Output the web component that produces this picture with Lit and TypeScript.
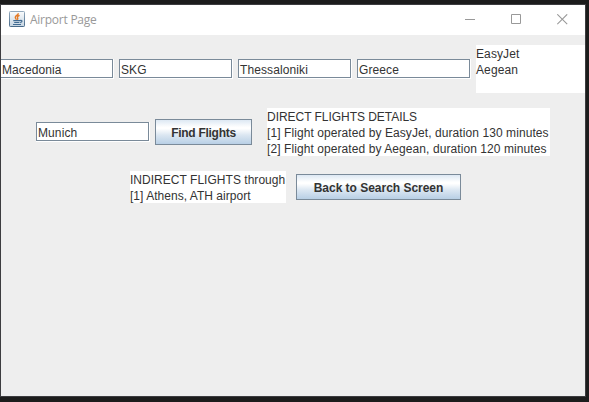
import { LitElement, html, css } from "lit";
import { customElement, property } from "lit/decorators.js";

@customElement("text-field")
class TextField extends LitElement {
  @property() value = "";
  static styles = css`
    :host {
      display: block;
      box-sizing: border-box;
      width: 114px;
      height: 20px;
      flex: none;
      border-right: 1px solid #fff;
      border-bottom: 1px solid #fff;
    }
    .box {
      box-sizing: border-box;
      height: 19px;
      border: 1px solid #7a8a99;
      background: #fff;
      padding: 1px 0 0 1px;
      line-height: 19px;
      white-space: pre;
    }
  `;
  render() {
    return html`<div class="box">${this.value}</div>`;
  }
}

@customElement("metal-button")
class MetalButton extends LitElement {
  static styles = css`
    :host {
      display: block;
      flex: none;
    }
    button {
      display: block;
      box-sizing: border-box;
      width: 100%;
      height: 26px;
      padding: 1px 0 0;
      border: 1px solid #7a8a99;
      border-radius: 0;
      background: linear-gradient(#dde8f3 0, #fff 30%, #fff 36%, #dce7f2 62%, #b8cfe5 100%);
      font: bold 12px "Liberation Sans", Arial, sans-serif;
      letter-spacing: inherit;
      color: #333;
      text-align: center;
      white-space: nowrap;
    }
  `;
  render() {
    return html`<button><slot></slot></button>`;
  }
}

@customElement("app-root")
class AppRoot extends LitElement {
  static styles = css`
    :host {
      display: block;
      box-sizing: border-box;
      width: 589px;
      height: 402px;
      padding-top: 4px;
      overflow: hidden;
      background: #1c1c1c;
      font: 12px/16px "Liberation Sans", Arial, sans-serif;
      letter-spacing: 0.1px;
      color: #333;
    }
    .window {
      box-sizing: border-box;
      width: 586px;
      height: 393px;
      border: 1px solid #3c3c3f;
      background: #eee;
      overflow: hidden;
    }
    .titlebar {
      display: flex;
      align-items: center;
      height: 30px;
      background: #fff;
      color: #999;
    }
    .logo {
      margin: -2px 0 0 8px;
      width: 16px;
      height: 16px;
    }
    .title {
      margin-left: 5px;
      flex: 1;
      font: 12px/16px "Open Sans", "Noto Sans", sans-serif;
      letter-spacing: -0.25px;
    }
    .controls {
      display: flex;
      gap: 35px;
      margin: -2px 17px 0 0;
    }
    .controls svg {
      width: 11px;
      height: 11px;
      display: block;
    }
    .row {
      display: flex;
      align-items: center;
      gap: 5px;
    }
    .first {
      margin: 10px 0 0 -1px;
    }
    .second {
      margin: 15px 0 0 35px;
    }
    .third {
      margin: 15px 0 0 129px;
    }
    .area {
      flex: none;
      background: #fff;
      white-space: pre;
      padding-top: 1px;
      box-sizing: border-box;
    }
    .airlines {
      width: 110px;
      height: 48px;
    }
    .direct {
      width: 283px;
      height: 48px;
      margin-left: 10px;
      letter-spacing: 0.08px;
    }
    .heading {
      letter-spacing: -0.04px;
    }
    .indirect {
      width: 156px;
      height: 32px;
      margin-right: 5px;
      letter-spacing: 0.03px;
    }
    .find {
      width: 97px;
      letter-spacing: -0.28px;
    }
    .back {
      width: 165px;
      letter-spacing: -0.02px;
    }
  `;
  render() {
    return html`
      <div class="window">
        <div class="titlebar">
          <svg class="logo" viewBox="0 0 16 16">
            <defs>
              <linearGradient id="face" x2="0" y2="1">
                <stop stop-color="#fafcfd" />
                <stop offset="1" stop-color="#c5d4e1" />
              </linearGradient>
              <linearGradient id="edge" x2="0" y2="1">
                <stop stop-color="#93a9bd" />
                <stop offset="1" stop-color="#486a89" />
              </linearGradient>
            </defs>
            <rect x=".5" y=".5" width="15" height="15" rx=".8" fill="url(#face)" stroke="url(#edge)" />
            <path d="M9.3 2.2C9.5 4.2 6.2 4.6 6.3 6.5 6.4 7.5 7.2 7.8 7.3 8.8M10.6 4.4C8.8 5 8 5.9 8.6 6.8 9 7.5 8.9 8 8.4 8.8" fill="none" stroke="#e57a25" stroke-width="1.4" />
            <path d="M4.3 9.6H11M5.2 11.5H10.4M4 13.5H12M11 9.5C13.8 8.8 13.6 11 11.2 11.7" fill="none" stroke="#416b92" stroke-width="1.2" />
          </svg>
          <span class="title">Airport Page</span>
          <div class="controls">
            <svg viewBox="0 0 11 11"><path d="M0 5.5H10" stroke="#999" /></svg>
            <svg viewBox="0 0 11 11"><path d="M.5 .5H9.5V9.5H.5Z" fill="none" stroke="#999" /></svg>
            <svg viewBox="0 0 11 11"><path d="M.3 .3L10.2 10.2M10.2 .3L.3 10.2" stroke="#999" stroke-width="1.1" /></svg>
          </div>
        </div>
        <div class="row first">
          ${["Macedonia", "SKG", "Thessaloniki", "Greece"].map(
            (v) => html`<text-field .value=${v}></text-field>`
          )}
          <div class="area airlines">${"EasyJet\nAegean"}</div>
        </div>
        <div class="row second">
          <text-field .value=${"Munich"}></text-field>
          <metal-button class="find">Find Flights</metal-button>
          <div class="area direct"><span class="heading">DIRECT FLIGHTS DETAILS</span>${"\n[1] Flight operated by EasyJet, duration 130 minutes\n[2] Flight operated by Aegean, duration 120 minutes"}</div>
        </div>
        <div class="row third">
          <div class="area indirect">${"INDIRECT FLIGHTS through\n[1] Athens, ATH airport"}</div>
          <metal-button class="back">Back to Search Screen</metal-button>
        </div>
      </div>
    `;
  }
}
